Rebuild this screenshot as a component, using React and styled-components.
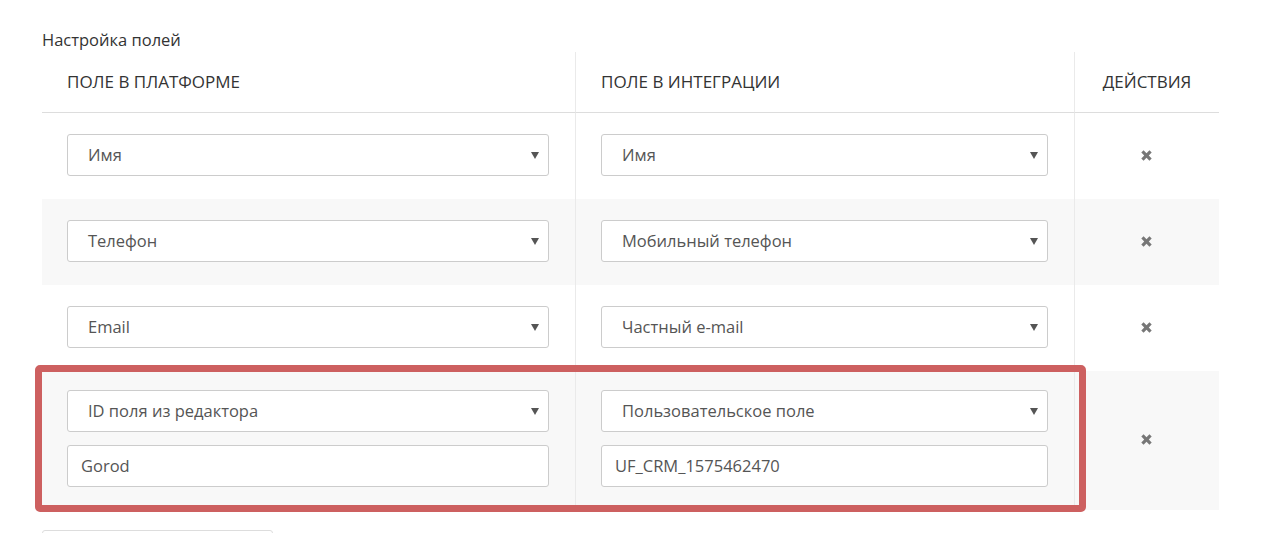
import React from 'react'
import styled, { createGlobalStyle } from 'styled-components'

const GlobalStyle = createGlobalStyle`
    body {
        margin: 0;
        background: #fff;
        font-family: "Open Sans", "Noto Sans", sans-serif;
        color: #333;
    }
`

const Page = styled.div`
    padding: 29px 46px 0 42px;
    height: 533px;
    overflow: hidden;
    box-sizing: border-box;
`

const Title = styled.div`
    font-size: 16.5px;
    line-height: 22px;
    color: #333;
    margin-bottom: 1px;
`

const Table = styled.div`
    display: grid;
    grid-template-columns: 533px 499px 145px;
`

const HeadCell = styled.div`
    height: 61px;
    display: flex;
    align-items: center;
    justify-content: ${p => (p.center ? 'center' : 'flex-start')};
    padding-left: ${p => (p.center ? '0' : '25px')};
    padding-bottom: 2px;
    border-bottom: 1px solid #ddd;
    border-left: ${p => (p.sep ? '1px solid #eaeaea' : 'none')};
    font-size: 17px;
    color: #333;
    text-transform: uppercase;
    box-sizing: border-box;
`

const Row = styled.div`
    grid-column: 1 / -1;
    display: grid;
    grid-template-columns: 533px 499px 145px;
    background: ${p => (p.striped ? '#f8f8f8' : '#fff')};
    position: relative;
`

const Cell = styled.div`
    display: flex;
    flex-direction: column;
    gap: 13px;
    padding: ${p => (p.tall ? '19px 26px 23px 25px' : '21px 26px 23px 25px')};
    border-left: ${p => (p.sep ? '1px solid #eaeaea' : 'none')};
    justify-content: center;
    align-items: ${p => (p.center ? 'center' : 'stretch')};
    box-sizing: border-box;
`

const SelectBox = styled.div`
    height: 42px;
    border: 1px solid #ccc;
    border-radius: 3px;
    background: #fff;
    display: flex;
    align-items: center;
    justify-content: space-between;
    padding: 0 9px 2px 20px;
    font-size: 16.5px;
    color: #555;
    box-sizing: border-box;
`

const InputBox = styled.div`
    height: 42px;
    border: 1px solid #ccc;
    border-radius: 3px;
    background: #fff;
    display: flex;
    align-items: center;
    padding: 0 13px 2px;
    font-size: 16.5px;
    color: #555;
    box-sizing: border-box;
`

const Arrow = styled.span`
    width: 0;
    height: 0;
    border-left: 4px solid transparent;
    border-right: 4px solid transparent;
    border-top: 7px solid #555;
    margin-top: 2px;
`

const RemoveButton = styled.button`
    border: none;
    background: none;
    padding: 0;
    cursor: pointer;
    display: flex;
    margin-top: 1px;
`

const Highlight = styled.div`
    position: absolute;
    left: -7px;
    top: -6px;
    width: 1051px;
    height: 147px;
    border: 7px solid #cd6060;
    border-radius: 5px;
    box-sizing: border-box;
    pointer-events: none;
`

const AddButton = styled.div`
    margin-top: 20px;
    width: 229px;
    height: 40px;
    border: 1px solid #ddd;
    border-radius: 3px;
`

function Select({ value }) {
    return (
        <SelectBox>
            <span>{value}</span>
            <Arrow />
        </SelectBox>
    )
}

function Times() {
    return (
        <svg width="13" height="13" viewBox="0 0 12 12">
            <path
                d="M1.2 3.3 L3.3 1.2 L6 3.9 L8.7 1.2 L10.8 3.3 L8.1 6 L10.8 8.7 L8.7 10.8 L6 8.1 L3.3 10.8 L1.2 8.7 L3.9 6 Z"
                fill="#777"
            />
        </svg>
    )
}

const rows = [
    { platform: 'Имя', integration: 'Имя' },
    { platform: 'Телефон', integration: 'Мобильный телефон' },
    { platform: 'Email', integration: 'Частный e-mail' },
    {
        platform: 'ID поля из редактора',
        integration: 'Пользовательское поле',
        platformValue: 'Gorod',
        integrationValue: 'UF_CRM_1575462470',
        highlighted: true,
    },
]

export default function App() {
    return (
        <Page>
            <GlobalStyle />
            <Title>Настройка полей</Title>
            <Table>
                <HeadCell>Поле в платформе</HeadCell>
                <HeadCell sep>Поле в интеграции</HeadCell>
                <HeadCell sep center>Действия</HeadCell>
                {rows.map((r, i) => (
                    <Row key={i} striped={i % 2 === 1}>
                        <Cell tall={r.highlighted}>
                            <Select value={r.platform} />
                            {r.platformValue && <InputBox>{r.platformValue}</InputBox>}
                        </Cell>
                        <Cell sep tall={r.highlighted}>
                            <Select value={r.integration} />
                            {r.integrationValue && <InputBox>{r.integrationValue}</InputBox>}
                        </Cell>
                        <Cell sep center tall={r.highlighted}>
                            <RemoveButton>
                                <Times />
                            </RemoveButton>
                        </Cell>
                        {r.highlighted && <Highlight />}
                    </Row>
                ))}
            </Table>
            <AddButton />
        </Page>
    )
}
